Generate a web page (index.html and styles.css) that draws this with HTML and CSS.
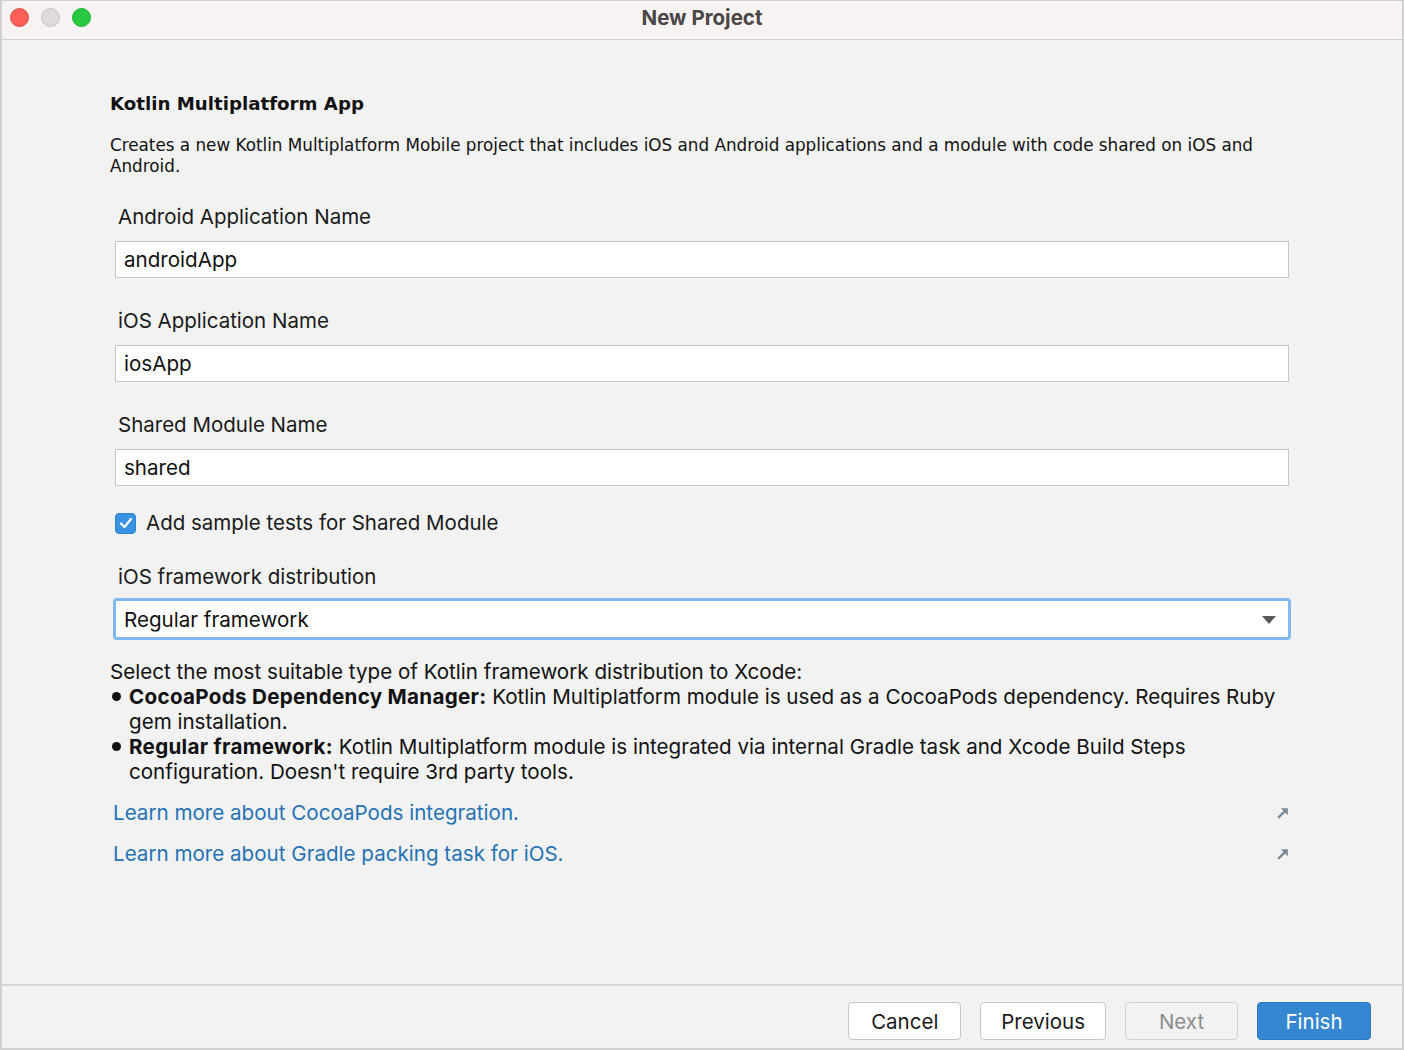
FILE: index.html
```html
<!DOCTYPE html>
<html lang="en">
<head>
<meta charset="utf-8">
<title>New Project</title>
<link rel="stylesheet" href="styles.css">
</head>
<body>
<div class="window">
  <header class="titlebar">
    <div class="lights">
      <span class="light red"></span>
      <span class="light grey"></span>
      <span class="light green"></span>
    </div>
    <div class="title">New Project</div>
  </header>
  <main class="content">
    <h1 class="heading">Kotlin Multiplatform App</h1>
    <p class="desc">Creates a new Kotlin Multiplatform Mobile project that includes iOS and Android applications and a module with code shared on iOS and Android.</p>

    <div class="field">
      <label class="label">Android Application Name</label>
      <div class="input">androidApp</div>
    </div>
    <div class="field">
      <label class="label">iOS Application Name</label>
      <div class="input">iosApp</div>
    </div>
    <div class="field">
      <label class="label">Shared Module Name</label>
      <div class="input">shared</div>
    </div>

    <div class="check">
      <span class="box"><svg width="14" height="12" viewBox="0 0 14 12"><path d="M2 6.5 L5.5 10 L12 2" fill="none" stroke="#fff" stroke-width="2.2" stroke-linecap="round" stroke-linejoin="round"/></svg></span>
      <span class="check-label">Add sample tests for Shared Module</span>
    </div>

    <div class="field field-select">
      <label class="label">iOS framework distribution</label>
      <div class="select">
        <span>Regular framework</span>
        <svg class="caret" width="14" height="8" viewBox="0 0 14 8"><path d="M0 0 H14 L7 8 Z" fill="#5a5a5a"/></svg>
      </div>
    </div>

    <div class="help">
      <p class="help-line">Select the most suitable type of Kotlin framework distribution to Xcode:</p>
      <ul class="bullets">
        <li><span class="dot"></span><span><b>CocoaPods Dependency Manager:</b> Kotlin Multiplatform module is used as a CocoaPods dependency. Requires Ruby gem installation.</span></li>
        <li><span class="dot"></span><span><b>Regular framework:</b> Kotlin Multiplatform module is integrated via internal Gradle task and Xcode Build Steps configuration. Doesn't require 3rd party tools.</span></li>
      </ul>
    </div>

    <div class="links">
      <div class="link-row">
        <a class="link">Learn more about CocoaPods integration.</a>
        <svg class="ext" width="12" height="12" viewBox="0 0 12 12"><path d="M1.8 10.2 L7.2 4.8" stroke="#7b8b97" stroke-width="2.4" stroke-linecap="round"/><path d="M3.8 1.2 H10.8 V8.2 Z" fill="#7b8b97"/></svg>
      </div>
      <div class="link-row">
        <a class="link">Learn more about Gradle packing task for iOS.</a>
        <svg class="ext" width="12" height="12" viewBox="0 0 12 12"><path d="M1.8 10.2 L7.2 4.8" stroke="#7b8b97" stroke-width="2.4" stroke-linecap="round"/><path d="M3.8 1.2 H10.8 V8.2 Z" fill="#7b8b97"/></svg>
      </div>
    </div>
  </main>
  <footer class="footer">
    <button class="btn">Cancel</button>
    <button class="btn">Previous</button>
    <button class="btn disabled">Next</button>
    <button class="btn primary">Finish</button>
  </footer>
</div>
</body>
</html>
```

FILE: styles.css
```css
* { box-sizing: border-box; }
html, body { margin: 0; padding: 0; }
body {
  width: 1404px;
  height: 1050px;
  background: #cfcfcf;
  font-family: "Inter", "Roboto", sans-serif;
  color: #1a1a1a;
}
.window {
  width: 1404px;
  height: 1050px;
  border: 2px solid #d0d0d0;
  border-top-width: 1px;
  background: #f2f2f2;
  display: flex;
  flex-direction: column;
}
.titlebar {
  height: 39px;
  flex: none;
  background: #f7f3f3;
  border-bottom: 1px solid #d2d2d2;
  display: flex;
  align-items: center;
  justify-content: center;
  position: relative;
}
.lights {
  position: absolute;
  left: 8px;
  top: 7px;
  display: flex;
  gap: 12px;
}
.light {
  width: 19px;
  height: 19px;
  border-radius: 50%;
  display: block;
}
.red { background: #fe5f57; border: 1px solid #e2463f; }
.grey { background: #dedada; border: 1px solid #c9c4c4; }
.green { background: #28c840; border: 1px solid #1fae33; }
.title {
  font-family: "Inter", sans-serif;
  font-weight: 700;
  font-size: 20.5px;
  color: #4a4646;
  margin-top: -6px;
}
.content {
  flex: 1;
  padding: 52px 113px 0 108px;
  display: flex;
  flex-direction: column;
}
.heading {
  margin: 0;
  font-family: "DejaVu Sans", sans-serif;
  font-weight: 700;
  font-size: 18.2px;
  line-height: 24px;
  color: #111;
}
.desc {
  margin: 19px 0 0 0;
  font-family: "DejaVu Sans", sans-serif;
  font-size: 16.8px;
  line-height: 21px;
  color: #111;
}
.field { margin-top: 28px; display: flex; flex-direction: column; }
.field + .field { margin-top: 31px; }
.label {
  margin-left: 8px;
  font-size: 20.5px;
  line-height: 24px;
  color: #1a1a1a;
}
.input {
  margin: 12px 0 0 5px;
  height: 37px;
  background: #fff;
  border: 1px solid #c7c7c7;
  padding: 0 8px;
  font-size: 20.6px;
  line-height: 35px;
  color: #111;
}
.check {
  margin: 25px 0 0 5px;
  display: flex;
  align-items: center;
  gap: 10px;
}
.box {
  width: 21px;
  height: 21px;
  border-radius: 4px;
  background: #3a93e2;
  border: 1px solid #2f83d0;
  display: flex;
  align-items: center;
  justify-content: center;
}
.check-label { font-size: 20.5px; line-height: 24px; }
.field-select { margin-top: 30px; }
.select {
  margin: 9px -2px 0 3px;
  height: 42px;
  background: #fff;
  border: 3px solid #80b8f0;
  border-radius: 4px;
  padding: 0 12px 0 8px;
  display: flex;
  align-items: center;
  justify-content: space-between;
  font-size: 20.6px;
  color: #111;
}
.caret { margin-top: 2px; }
.help { margin: 19px 0 0 0; font-size: 20.6px; line-height: 25px; color: #111; }
.help-line { margin: 0; }
.bullets { margin: 0; padding: 0; list-style: none; }
.bullets li { display: flex; align-items: flex-start; gap: 8px; }
.bullets b { letter-spacing: 0.3px; }
.dot {
  flex: none;
  width: 9px;
  height: 9px;
  margin: 8px 0 0 2px;
  border-radius: 50%;
  background: #111;
}
.links { margin: 16px 0 0 3px; display: flex; flex-direction: column; gap: 16px; }
.link-row { display: flex; align-items: center; justify-content: space-between; }
.link { font-size: 20.6px; line-height: 25px; color: #2572b6; }
.footer {
  height: 64px;
  flex: none;
  border-top: 2px solid #d6d6d6;
  display: flex;
  justify-content: flex-end;
  align-items: flex-start;
  gap: 19px;
  padding: 16px 31px 0 0;
}
.btn {
  height: 38px;
  min-width: 113px;
  padding: 0 20px;
  background: #fff;
  border: 1px solid #c6c6c6;
  border-radius: 4px;
  font-family: "Inter", sans-serif;
  font-size: 20.5px;
  color: #1a1a1a;
}
.btn.disabled { background: #f2f2f2; color: #8c8c8c; border-color: #d2d2d2; }
.btn.primary { background: #3687d2; color: #fff; border-color: #2c77c0; min-width: 114px; }
```
